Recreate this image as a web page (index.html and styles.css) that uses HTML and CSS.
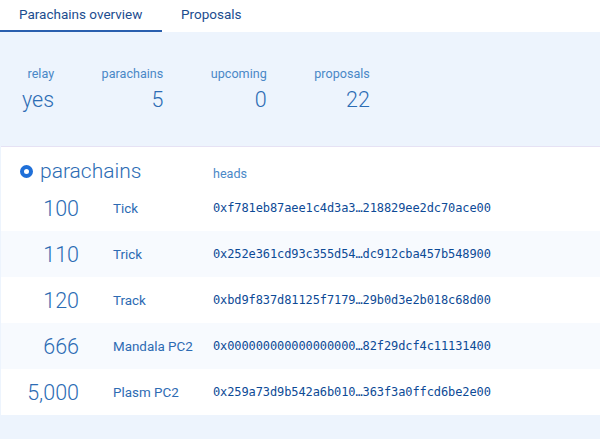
FILE: index.html
```html
<!DOCTYPE html>
<html>
<head>
<meta charset="utf-8">
<link rel="stylesheet" href="styles.css">
</head>
<body>
<div class="tabs">
  <div class="tab active">Parachains overview</div>
  <div class="tab">Proposals</div>
</div>
<div class="page">
  <div class="summary">
    <div class="sitem"><div class="slabel">relay</div><div class="svalue">yes</div></div>
    <div class="sitem"><div class="slabel">parachains</div><div class="svalue">5</div></div>
    <div class="sitem"><div class="slabel">upcoming</div><div class="svalue">0</div></div>
    <div class="sitem"><div class="slabel">proposals</div><div class="svalue">22</div></div>
  </div>
  <div class="card">
    <div class="row head">
      <div class="title"><span class="dot"></span>parachains</div>
      <div class="heads">heads</div>
    </div>
    <div class="row">
      <div class="num">100</div><div class="name">Tick</div><div class="hash">0xf781eb87aee1c4d3a3…218829ee2dc70ace00</div>
    </div>
    <div class="row alt">
      <div class="num">110</div><div class="name">Trick</div><div class="hash">0x252e361cd93c355d54…dc912cba457b548900</div>
    </div>
    <div class="row">
      <div class="num">120</div><div class="name">Track</div><div class="hash">0xbd9f837d81125f7179…29b0d3e2b018c68d00</div>
    </div>
    <div class="row alt">
      <div class="num">666</div><div class="name">Mandala PC2</div><div class="hash">0x000000000000000000…82f29dcf4c11131400</div>
    </div>
    <div class="row">
      <div class="num">5,000</div><div class="name">Plasm PC2</div><div class="hash">0x259a73d9b542a6b010…363f3a0ffcd6be2e00</div>
    </div>
  </div>
</div>
</body>
</html>
```
FILE: styles.css
```css
* { box-sizing: border-box; }
html, body { margin: 0; padding: 0; }
body {
  width: 600px;
  height: 439px;
  overflow: hidden;
  background: #edf4fd;
  font-family: Roboto, "Liberation Sans", sans-serif;
}
.tabs {
  display: flex;
  height: 32px;
  background: #ffffff;
}
.tab {
  font-size: 13.5px;
  color: #1c4d8f;
  padding: 6px 19px 0 19px;
  height: 32px;
  line-height: 17px;
}
.tab.active {
  border-bottom: 2px solid #2a5fae;
  width: 162px;
}
.summary {
  display: flex;
  gap: 47.5px;
  padding: 34px 0 0 22px;
  height: 114px;
}
.sitem {
  text-align: right;
}
.slabel {
  font-size: 12.6px;
  color: #4a88c7;
  line-height: 16px;
}
.svalue {
  font-size: 21.5px;
  font-weight: 300;
  color: #2c6cb4;
  line-height: 24px;
  margin-top: 6px;
}
.card {
  margin-left: 1px;
  background: #ffffff;
  border-top: 1px solid #e6e2f4;
}
.row {
  display: flex;
  align-items: center;
  height: 46px;
  background: #ffffff;
}
.row.alt { background: #f7fafe; }
.row.head {
  height: 38px;
  align-items: flex-end;
  padding-bottom: 2px;
}
.title {
  display: flex;
  align-items: center;
  width: 212px;
  padding-left: 19px;
  font-size: 21px;
  font-weight: 300;
  color: #2c6cb4;
  line-height: 24px;
}
.dot {
  width: 13px;
  height: 13px;
  border-radius: 50%;
  border: 4px solid #1f6fd8;
  margin-right: 7px;
  margin-top: 1px;
}
.heads {
  font-size: 12.6px;
  color: #4a88c7;
  padding-bottom: 2px;
}
.num {
  width: 78px;
  text-align: right;
  font-size: 21.5px;
  font-weight: 300;
  color: #2c6cb4;
}
.name {
  width: 134px;
  padding-left: 34px;
  font-size: 13.4px;
  color: #2d6bb3;
}
.hash {
  font-family: "DejaVu Sans Mono", monospace;
  font-size: 12px;
  color: #0d4a96;
  letter-spacing: -0.1px;
}
```
